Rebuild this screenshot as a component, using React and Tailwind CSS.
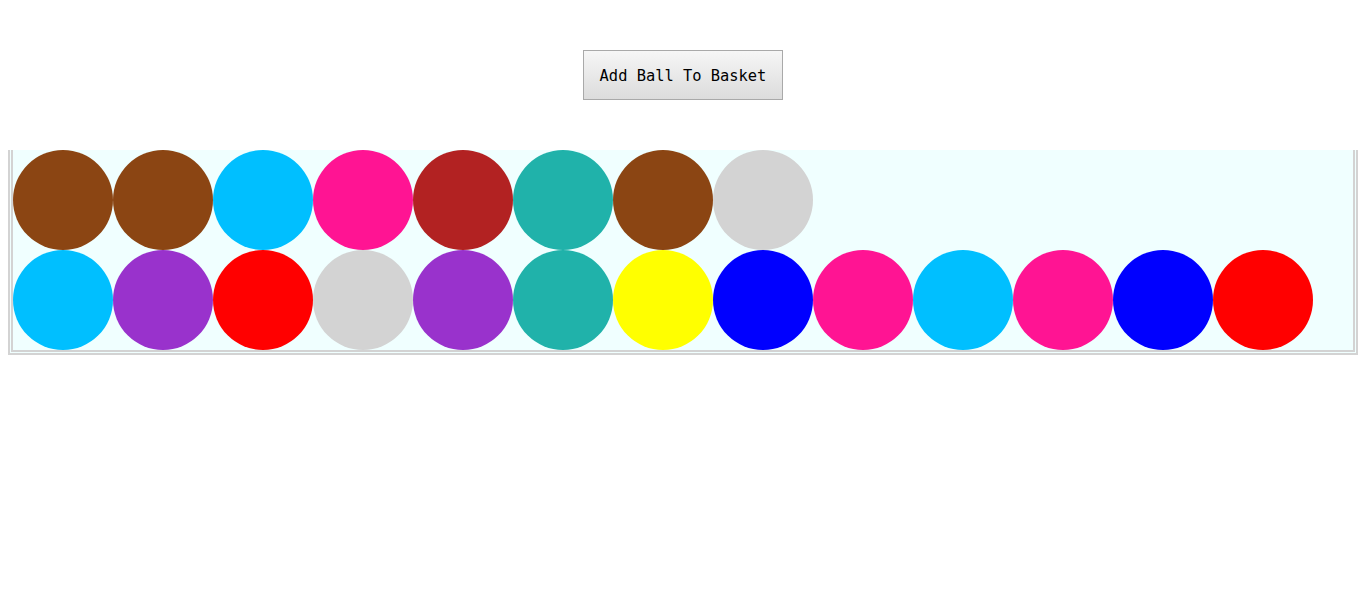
import React from 'react';

const balls = [
  '#00bfff', '#9932cc', '#ff0000', '#d3d3d3', '#9932cc', '#20b2aa', '#ffff00',
  '#0000ff', '#ff1493', '#00bfff', '#ff1493', '#0000ff', '#ff0000',
  '#8b4513', '#8b4513', '#00bfff', '#ff1493', '#b22222', '#20b2aa', '#8b4513', '#d3d3d3',
];

function App() {
  return (
    <div className="min-h-screen bg-white px-2 pt-[50px]">
      {/* Controls */}
      <div className="flex justify-center">
        <button className="w-[200px] h-[50px] pt-[4px] border border-[#a9a9a9] bg-gradient-to-b from-[#f6f6f6] to-[#dcdcdc] text-black text-[15.4px] leading-none font-['DejaVu_Sans_Mono','Liberation_Mono',monospace]">
          Add Ball To Basket
        </button>
      </div>

      {/* Basket */}
      <div className="mt-[50px] flex flex-wrap-reverse content-start border-[5px] border-t-0 border-double border-[#d3d3d3] bg-[#f0ffff]">
        {balls.map((color, i) => (
          <div
            key={i}
            className="w-[100px] h-[100px] rounded-full"
            style={{ backgroundColor: color }}
          />
        ))}
      </div>
    </div>
  );
}

export default App;
